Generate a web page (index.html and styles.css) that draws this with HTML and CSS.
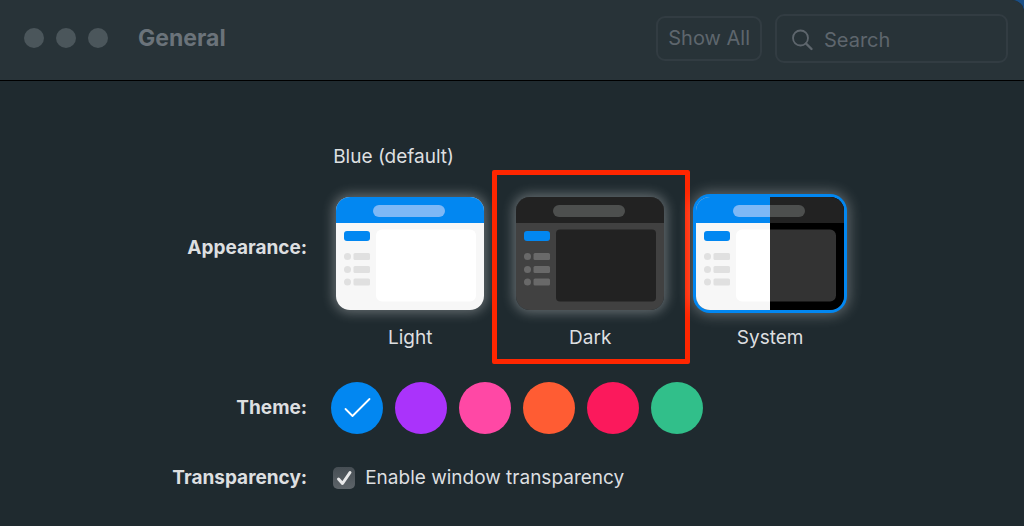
FILE: index.html
```html
<!DOCTYPE html>
<html lang="en">
<head>
    <meta charset="UTF-8">
    <meta name="viewport" content="width=device-width, initial-scale=1.0">
    <title>General</title>
    <link rel="stylesheet" href="styles.css">
</head>
<body>

    <header class="toolbar">
        <div class="window-dots">
            <span></span>
            <span></span>
            <span></span>
        </div>
        <h1>General</h1>
        <button type="button" class="show-all">Show All</button>
        <label class="search">
            <svg width="22" height="22" viewBox="0 0 22 22" fill="none" stroke="currentColor" stroke-linecap="round">
                <circle cx="8.5" cy="9" r="7.5" stroke-width="1.8"/>
                <path d="M14 14.5L19.5 20" stroke-width="2.4"/>
            </svg>
            <input type="search" placeholder="Search" aria-label="Search">
        </label>
    </header>

    <main class="settings">
        <div class="row-label" id="appearance-label">Appearance:</div>
        <div>
            <p class="theme-name">Blue (default)</p>
            <div class="appearances" role="radiogroup" aria-labelledby="appearance-label">
                <label class="appearance">
                    <input type="radio" name="appearance" value="light">
                    <svg class="thumb" viewBox="0 0 148 113">
                        <rect width="148" height="113" fill="#f7f7f7"/>
                        <rect width="148" height="26" fill="#0287f1"/>
                        <rect x="37" y="8" width="72" height="12" rx="6" fill="#7eb8f6"/>
                        <rect x="8" y="34" width="26" height="10" rx="3" fill="#0287f1"/>
                        <g fill="#e0e0e0">
                            <circle cx="11.5" cy="59.5" r="3.5"/>
                            <circle cx="11.5" cy="72.5" r="3.5"/>
                            <circle cx="11.5" cy="85" r="3.5"/>
                            <rect x="17.5" y="56" width="16.5" height="7" rx="1.5"/>
                            <rect x="17.5" y="69" width="16.5" height="7" rx="1.5"/>
                            <rect x="17.5" y="81.5" width="16.5" height="7" rx="1.5"/>
                        </g>
                        <rect x="40" y="32.5" width="100" height="72" rx="6" fill="#fff"/>
                    </svg>
                    <span>Light</span>
                </label>
                <label class="appearance highlight">
                    <input type="radio" name="appearance" value="dark">
                    <svg class="thumb" viewBox="0 0 148 113">
                        <rect width="148" height="113" fill="#414141"/>
                        <rect width="148" height="26" fill="#222"/>
                        <rect x="37" y="8" width="72" height="12" rx="6" fill="#4d4f4e"/>
                        <rect x="8" y="34" width="26" height="10" rx="3" fill="#0287f1"/>
                        <g fill="#696969">
                            <circle cx="11.5" cy="59.5" r="3.5"/>
                            <circle cx="11.5" cy="72.5" r="3.5"/>
                            <circle cx="11.5" cy="85" r="3.5"/>
                            <rect x="17.5" y="56" width="16.5" height="7" rx="1.5"/>
                            <rect x="17.5" y="69" width="16.5" height="7" rx="1.5"/>
                            <rect x="17.5" y="81.5" width="16.5" height="7" rx="1.5"/>
                        </g>
                        <rect x="40" y="32.5" width="100" height="72" rx="4" fill="#222"/>
                    </svg>
                    <span>Dark</span>
                </label>
                <label class="appearance">
                    <input type="radio" name="appearance" value="system" checked>
                    <svg class="thumb" viewBox="0 0 148 113">
                        <rect width="74" height="113" fill="#f7f7f7"/>
                        <rect x="74" width="74" height="113" fill="#000"/>
                        <rect width="74" height="26" fill="#0287f1"/>
                        <rect x="74" width="74" height="26" fill="#222"/>
                        <path d="M74 8H43a6 6 0 0 0 0 12H74z" fill="#7eb8f6"/>
                        <path d="M74 8H103a6 6 0 0 1 0 12H74z" fill="#4d4f4e"/>
                        <rect x="8" y="34" width="26" height="10" rx="3" fill="#0287f1"/>
                        <g fill="#e0e0e0">
                            <circle cx="11.5" cy="59.5" r="3.5"/>
                            <circle cx="11.5" cy="72.5" r="3.5"/>
                            <circle cx="11.5" cy="85" r="3.5"/>
                            <rect x="17.5" y="56" width="16.5" height="7" rx="1.5"/>
                            <rect x="17.5" y="69" width="16.5" height="7" rx="1.5"/>
                            <rect x="17.5" y="81.5" width="16.5" height="7" rx="1.5"/>
                        </g>
                        <path d="M74 32.5H46a6 6 0 0 0-6 6v60a6 6 0 0 0 6 6H74z" fill="#fff"/>
                        <path d="M74 32.5H134a6 6 0 0 1 6 6v60a6 6 0 0 1-6 6H74z" fill="#333"/>
                    </svg>
                    <span>System</span>
                </label>
            </div>
        </div>

        <div class="row-label" id="theme-label">Theme:</div>
        <div class="themes" role="radiogroup" aria-labelledby="theme-label">
            <label class="swatch blue">
                <input type="radio" name="theme" value="blue" aria-label="Blue" checked>
                <svg viewBox="0 0 52 52" fill="none" stroke="#fff" stroke-width="1.8" stroke-linecap="round" stroke-linejoin="round">
                    <path d="M14.5 27L21.5 34L38.5 17"/>
                </svg>
            </label>
            <label class="swatch purple"><input type="radio" name="theme" value="purple" aria-label="Purple"></label>
            <label class="swatch pink"><input type="radio" name="theme" value="pink" aria-label="Pink"></label>
            <label class="swatch orange"><input type="radio" name="theme" value="orange" aria-label="Orange"></label>
            <label class="swatch red"><input type="radio" name="theme" value="red" aria-label="Red"></label>
            <label class="swatch green"><input type="radio" name="theme" value="green" aria-label="Green"></label>
        </div>

        <div class="row-label">Transparency:</div>
        <label class="check">
            <span class="check-box">
                <input type="checkbox" checked>
                <svg viewBox="0 0 22 22" fill="none" stroke="#e8e9ea" stroke-width="3" stroke-linecap="round" stroke-linejoin="round">
                    <path d="M5.5 12L9.5 16.5L17 5.5"/>
                </svg>
            </span>
            Enable window transparency
        </label>
    </main>

</body>
</html>
```
FILE: styles.css
```css
* {
    box-sizing: border-box;
}
html {
    background-color: #1b4f86;
}
body {
    margin: 0;
    min-height: 100vh;
    border-top-right-radius: 12px;
    background-color: #1f2a2f;
    color: #dddfe0;
    font-family: Inter, "Liberation Sans", sans-serif;
    font-size: 19px;
    line-height: 24px;
}
.toolbar {
    display: flex;
    align-items: center;
    min-height: 81px;
    padding: 0 16px 4px 24px;
    border-top-right-radius: 12px;
    background-color: #283338;
    border-bottom: 1px solid #000;
}
.window-dots {
    display: flex;
    gap: 12px;
}
.window-dots span {
    width: 20px;
    height: 20px;
    border-radius: 50%;
    background-color: #4b565b;
}
h1 {
    flex-grow: 1;
    margin: 0 0 0 30px;
    font-size: 23px;
    font-weight: 700;
    color: #6b737a;
}
.show-all {
    height: 45px;
    padding: 0 10px;
    border: 2px solid #323c42;
    border-radius: 9px;
    background: none;
    color: #5e666d;
    font-family: inherit;
    font-size: 20px;
}
.search {
    display: flex;
    align-items: center;
    gap: 10px;
    width: 233px;
    height: 49px;
    margin-left: 13px;
    padding: 3px 16px 0 15px;
    border: 2px solid #323c42;
    border-radius: 9px;
    color: #5e666d;
}
.search svg {
    flex-shrink: 0;
}
.search input {
    width: 100%;
    padding: 0;
    border: none;
    outline: none;
    background: none;
    color: inherit;
    font-family: inherit;
    font-size: 20px;
}
.search input::placeholder {
    color: #5e666d;
}
.settings {
    display: grid;
    grid-template-columns: 30% 1fr;
    align-items: center;
    gap: 32px 24px;
    padding: 64px 0 24px;
}
.row-label {
    font-weight: 700;
    text-align: right;
}
.theme-name {
    margin: 0 2px 28px;
}
.appearances {
    display: flex;
    gap: 32px;
    margin-left: 5px;
}
.appearance {
    position: relative;
    display: flex;
    flex-direction: column;
    align-items: center;
    gap: 16px;
    width: 148px;
}
.appearance input, .swatch input {
    position: absolute;
    opacity: 0;
}
.thumb {
    width: 148px;
    height: 113px;
    border-radius: 14px;
    box-shadow: 0 0 12px 3px rgba(255, 255, 255, 0.3);
}
input:checked + .thumb {
    box-shadow: 0 0 0 3px #0287f1, 0 0 14px 5px rgba(255, 255, 255, 0.3);
}
.highlight::after {
    content: "";
    position: absolute;
    inset: -27px -26px -14px -24px;
    border: 5px solid #ff2600;
    border-radius: 2px;
}
.themes {
    display: flex;
    gap: 12px;
}
.swatch {
    width: 52px;
    height: 52px;
    border-radius: 50%;
}
.swatch svg {
    display: block;
}
.blue {
    background-color: #0287f1;
}
.purple {
    background-color: #aa33fb;
}
.pink {
    background-color: #ff48a5;
}
.orange {
    background-color: #ff5c33;
}
.red {
    background-color: #fb195c;
}
.green {
    background-color: #31bf8a;
}
.check {
    display: flex;
    align-items: center;
    gap: 10px;
    margin-left: 2px;
}
.check-box {
    position: relative;
    width: 22px;
    height: 22px;
}
.check-box input {
    appearance: none;
    display: block;
    width: 22px;
    height: 22px;
    margin: 0;
    border-radius: 5px;
    background: linear-gradient(#464e54, #5d6469);
}
.check-box svg {
    position: absolute;
    inset: 0;
    pointer-events: none;
}
.check-box input:not(:checked) + svg {
    display: none;
}
```
